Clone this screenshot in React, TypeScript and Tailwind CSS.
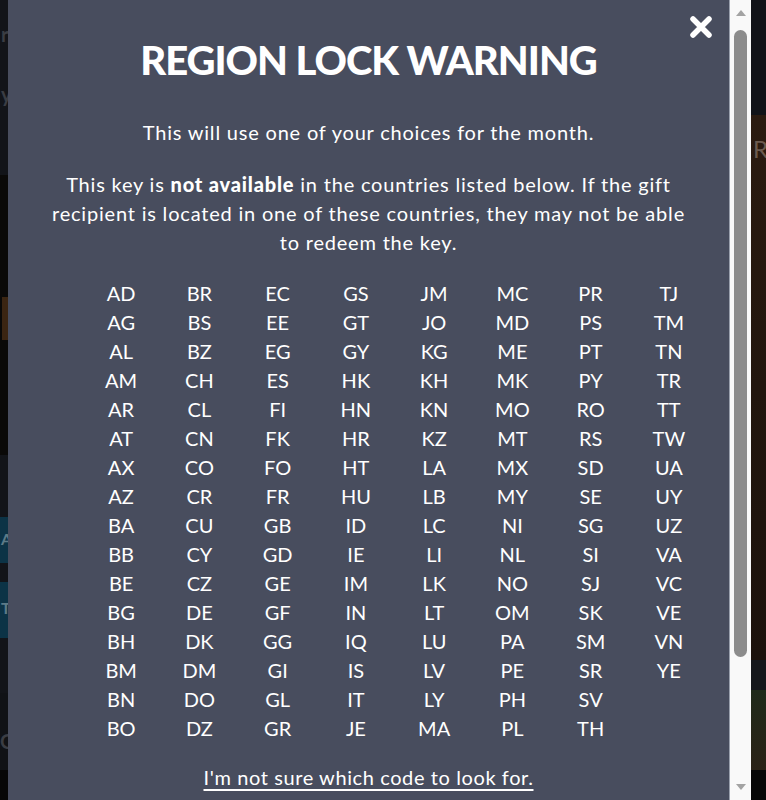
import { useState } from "react";

const columns: string[][] = [
  ["AD", "AG", "AL", "AM", "AR", "AT", "AX", "AZ", "BA", "BB", "BE", "BG", "BH", "BM", "BN", "BO"],
  ["BR", "BS", "BZ", "CH", "CL", "CN", "CO", "CR", "CU", "CY", "CZ", "DE", "DK", "DM", "DO", "DZ"],
  ["EC", "EE", "EG", "ES", "FI", "FK", "FO", "FR", "GB", "GD", "GE", "GF", "GG", "GI", "GL", "GR"],
  ["GS", "GT", "GY", "HK", "HN", "HR", "HT", "HU", "ID", "IE", "IM", "IN", "IQ", "IS", "IT", "JE"],
  ["JM", "JO", "KG", "KH", "KN", "KZ", "LA", "LB", "LC", "LI", "LK", "LT", "LU", "LV", "LY", "MA"],
  ["MC", "MD", "ME", "MK", "MO", "MT", "MX", "MY", "NI", "NL", "NO", "OM", "PA", "PE", "PH", "PL"],
  ["PR", "PS", "PT", "PY", "RO", "RS", "SD", "SE", "SG", "SI", "SJ", "SK", "SM", "SR", "SV", "TH"],
  ["TJ", "TM", "TN", "TR", "TT", "TW", "UA", "UY", "UZ", "VA", "VC", "VE", "VN", "YE"],
];

function Backdrop() {
  // dimmed store page behind the modal, only the edges peek out
  return (
    <div className="flex w-full h-[800px] bg-[#101217]">
      <div className="w-[60px] flex flex-col text-[#3a3d44] font-bold overflow-hidden">
        <div className="h-[175px] bg-[#121419] pl-[1px] pt-[22px] text-xl leading-[24px]">
          <div>r</div>
          <div className="mt-[36px]">ys</div>
        </div>
        <div className="h-[280px] bg-[#0a0908] pt-[122px]">
          <div className="w-[6px] h-[43px] ml-[2px] bg-[#3b2512]" />
        </div>
        <div className="h-[62px] bg-[#121419]" />
        <div className="h-[46px] bg-[#0c3346] text-[#5d7b88] pl-[1px] pt-[10px]">A</div>
        <div className="h-[19px] bg-[#121419]" />
        <div className="h-[56px] bg-[#0c3346] text-[#5d7b88] pl-[1px] pt-[14px]">T</div>
        <div className="h-[55px] bg-[#121419]" />
        <div className="h-[77px] bg-[#101216] pt-[36px] text-xl leading-[24px]">G</div>
        <div className="flex-1 bg-[#070707]" />
      </div>
      <div className="flex-1" />
      <div className="w-[15px] flex flex-col overflow-hidden">
        <div className="h-[115px] bg-[#111318]" />
        <div className="h-[545px] bg-gradient-to-b from-[#2b1b10] via-[#22160e] to-[#1c120c] pt-[18px] pl-[2px] text-[#6b5a4e] text-2xl whitespace-nowrap">
          Re
        </div>
        <div className="h-[30px] bg-[#15171c]" />
        <div className="h-[80px] bg-gradient-to-b from-[#1f2a1a] to-[#2a2216]" />
        <div className="flex-1 bg-[#070707]" />
      </div>
    </div>
  );
}

function Scrollbar() {
  return (
    <div className="w-[22px] h-full bg-[#f9f9f9] border-l border-[#9aa0ad] flex flex-col items-center">
      <svg width="10" height="6" viewBox="0 0 10 6" className="mt-[10px]">
        <polygon points="5,0 10,6 0,6" fill="#a3a3a3" />
      </svg>
      <div className="mt-[14px] w-[13px] h-[627px] rounded-full bg-[#8c8c8c]" />
      <div className="flex-1" />
      <svg width="10" height="6" viewBox="0 0 10 6" className="mb-[10px]">
        <polygon points="0,0 10,0 5,6" fill="#a3a3a3" />
      </svg>
    </div>
  );
}

export default function App() {
  const [open, setOpen] = useState(true);

  return (
    <div className="relative w-full h-[800px] overflow-hidden font-['Lato',sans-serif]">
      <Backdrop />
      {open && (
        <div className="absolute inset-y-0 left-[8px] right-[15px] flex">
          <div className="relative flex-1 bg-[#484d5e] text-white overflow-hidden">
            <button
              onClick={() => setOpen(false)}
              className="absolute right-[17px] top-[16px] w-[22px] h-[22px]"
            >
              <svg width="22" height="22" viewBox="0 0 22 22">
                <path d="M3 3 L19 19 M19 3 L3 19" stroke="white" strokeWidth="5.5" strokeLinecap="round" />
              </svg>
            </button>
            <div className="flex flex-col items-center px-9 pt-[36px] tracking-[0.05em]">
              <h1 className="text-[40px] leading-[48px] font-black tracking-tight">REGION LOCK WARNING</h1>
              <p className="mt-[34px] text-[20px] leading-[29px] text-center">
                This will use one of your choices for the month.
              </p>
              <p className="mt-[23px] text-[20px] leading-[29px] text-center">
                This key is <span className="font-black">not available</span> in the countries listed below. If the gift
                recipient is located in one of these countries, they may not be able to redeem the key.
              </p>
            </div>
            <div className="mt-[22px] ml-[74px] w-[626px] grid grid-cols-8">
              {columns.map((col, i) => (
                <div key={i} className="flex flex-col">
                  {col.map((code) => (
                    <span key={code} className="h-[29px] text-[20px] leading-[29px] text-center">
                      {code}
                    </span>
                  ))}
                </div>
              ))}
            </div>
            <div className="mt-[20px] text-center">
              <a href="#" className="text-[20px] leading-[29px] tracking-[0.03em] underline underline-offset-[4px]">
                I'm not sure which code to look for.
              </a>
            </div>
          </div>
          <Scrollbar />
        </div>
      )}
    </div>
  );
}
